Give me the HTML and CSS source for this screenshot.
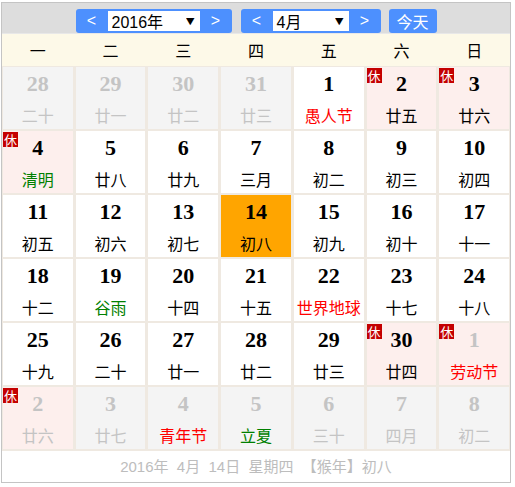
FILE: index.html
```html
<!DOCTYPE html>
<html lang="zh">
<head>
<meta charset="utf-8">
<link rel="stylesheet" href="styles.css">
</head>
<body>
<div class="cal">
  <div class="toolbar">
    <div class="group year">
      <span class="arrow">&lt;</span>
      <div class="select"><span class="val">2016年</span><span class="caret">▼</span></div>
      <span class="arrow">&gt;</span>
    </div>
    <div class="group month">
      <span class="arrow">&lt;</span>
      <div class="select"><span class="val">4月</span><span class="caret">▼</span></div>
      <span class="arrow">&gt;</span>
    </div>
    <div class="today-btn">今天</div>
  </div>
  <div class="weekdays">
    <span>一</span><span>二</span><span>三</span><span>四</span><span>五</span><span>六</span><span>日</span>
  </div>
  <div class="grid">
    <div class="cell other dim"><span class="num">28</span><span class="lunar">二十</span></div>
    <div class="cell other dim"><span class="num">29</span><span class="lunar">廿一</span></div>
    <div class="cell other dim"><span class="num">30</span><span class="lunar">廿二</span></div>
    <div class="cell other dim"><span class="num">31</span><span class="lunar">廿三</span></div>
    <div class="cell"><span class="num">1</span><span class="lunar fest">愚人节</span></div>
    <div class="cell rest"><span class="badge">休</span><span class="num">2</span><span class="lunar">廿五</span></div>
    <div class="cell rest"><span class="badge">休</span><span class="num">3</span><span class="lunar">廿六</span></div>

    <div class="cell rest"><span class="badge">休</span><span class="num">4</span><span class="lunar term">清明</span></div>
    <div class="cell"><span class="num">5</span><span class="lunar">廿八</span></div>
    <div class="cell"><span class="num">6</span><span class="lunar">廿九</span></div>
    <div class="cell"><span class="num">7</span><span class="lunar">三月</span></div>
    <div class="cell"><span class="num">8</span><span class="lunar">初二</span></div>
    <div class="cell"><span class="num">9</span><span class="lunar">初三</span></div>
    <div class="cell"><span class="num">10</span><span class="lunar">初四</span></div>

    <div class="cell"><span class="num">11</span><span class="lunar">初五</span></div>
    <div class="cell"><span class="num">12</span><span class="lunar">初六</span></div>
    <div class="cell"><span class="num">13</span><span class="lunar">初七</span></div>
    <div class="cell today"><span class="num">14</span><span class="lunar">初八</span></div>
    <div class="cell"><span class="num">15</span><span class="lunar">初九</span></div>
    <div class="cell"><span class="num">16</span><span class="lunar">初十</span></div>
    <div class="cell"><span class="num">17</span><span class="lunar">十一</span></div>

    <div class="cell"><span class="num">18</span><span class="lunar">十二</span></div>
    <div class="cell"><span class="num">19</span><span class="lunar term">谷雨</span></div>
    <div class="cell"><span class="num">20</span><span class="lunar">十四</span></div>
    <div class="cell"><span class="num">21</span><span class="lunar">十五</span></div>
    <div class="cell"><span class="num">22</span><span class="lunar fest">世界地球</span></div>
    <div class="cell"><span class="num">23</span><span class="lunar">十七</span></div>
    <div class="cell"><span class="num">24</span><span class="lunar">十八</span></div>

    <div class="cell"><span class="num">25</span><span class="lunar">十九</span></div>
    <div class="cell"><span class="num">26</span><span class="lunar">二十</span></div>
    <div class="cell"><span class="num">27</span><span class="lunar">廿一</span></div>
    <div class="cell"><span class="num">28</span><span class="lunar">廿二</span></div>
    <div class="cell"><span class="num">29</span><span class="lunar">廿三</span></div>
    <div class="cell rest"><span class="badge">休</span><span class="num">30</span><span class="lunar">廿四</span></div>
    <div class="cell rest dim"><span class="badge">休</span><span class="num">1</span><span class="lunar fest">劳动节</span></div>

    <div class="cell rest dim"><span class="badge">休</span><span class="num">2</span><span class="lunar">廿六</span></div>
    <div class="cell other dim"><span class="num">3</span><span class="lunar">廿七</span></div>
    <div class="cell other dim"><span class="num">4</span><span class="lunar fest">青年节</span></div>
    <div class="cell other dim"><span class="num">5</span><span class="lunar term">立夏</span></div>
    <div class="cell other dim"><span class="num">6</span><span class="lunar">三十</span></div>
    <div class="cell other dim"><span class="num">7</span><span class="lunar">四月</span></div>
    <div class="cell other dim"><span class="num">8</span><span class="lunar">初二</span></div>
  </div>
  <div class="footer">2016年&nbsp; 4月&nbsp; 14日&nbsp; 星期四&nbsp; 【猴年】初八</div>
</div>
</body>
</html>
```

FILE: styles.css
```css
html, body {
  margin: 0;
  padding: 0;
  background: #fff;
}
body {
  font-family: "Liberation Sans", "Noto Sans CJK SC", sans-serif;
}
.cal {
  width: 508px;
  margin: 2px 0 0 1px;
  border: 1px solid #c4c4c4;
  background: #fff;
}
.toolbar {
  height: 31px;
  box-sizing: border-box;
  padding-top: 6px;
  background: #dddddd;
  border-bottom: 1px solid #e8e8e8;
  display: flex;
  justify-content: center;
  align-items: flex-start;
  gap: 8px;
}
.group {
  height: 24px;
  background: #4d90fe;
  border-radius: 3px;
  display: flex;
  align-items: center;
}
.year { margin-right: 1px; }
.arrow {
  width: 32px;
  text-align: center;
  color: #fff;
  font-size: 16px;
  line-height: 24px;
}
.select {
  height: 20px;
  background: #fff;
  display: flex;
  align-items: center;
  justify-content: space-between;
  box-sizing: border-box;
  padding: 0 5px 0 4px;
  font-size: 16px;
  color: #000;
}
.year .select { width: 92px; }
.month .select { width: 76px; }
.caret {
  font-size: 11px;
  line-height: 20px;
  font-family: "DejaVu Sans", sans-serif;
  transform: scaleY(0.85);
}
.today-btn {
  width: 48px;
  height: 24px;
  background: #4d90fe;
  border-radius: 3px;
  color: #fff;
  font-size: 16px;
  line-height: 24px;
  text-align: center;
  font-family: "Noto Sans CJK SC", sans-serif;
}
.weekdays {
  height: 32px;
  background: #fdf9e8;
  display: grid;
  grid-template-columns: repeat(7, 1fr);
  padding: 0 1px;
  column-gap: 3px;
}
.weekdays span {
  text-align: center;
  font-size: 16px;
  line-height: 32px;
  color: #000;
  font-family: "Noto Sans CJK SC", sans-serif;
}
.grid {
  background: #efe9e1;
  padding: 1px 1px 2px;
  display: grid;
  grid-template-columns: repeat(7, 1fr);
  grid-auto-rows: 62px;
  column-gap: 3px;
  row-gap: 2px;
}
.cell {
  position: relative;
  background: #fff;
  display: flex;
  flex-direction: column;
  align-items: center;
  padding-top: 6px;
  box-sizing: border-box;
}
.cell.other { background: #f4f4f4; }
.cell.rest { background: #fdefed; }
.cell.today { background: #ffa500; }
.num {
  font-family: "Liberation Serif", serif;
  font-weight: bold;
  font-size: 22px;
  line-height: 22px;
  color: #000;
}
.lunar {
  margin-top: 10px;
  font-family: "Noto Sans CJK SC", sans-serif;
  font-size: 16px;
  line-height: 20px;
  color: #000;
  white-space: nowrap;
}
.cell.dim .num,
.cell.dim .lunar { color: #c4c4c4; }
.cell .lunar.fest { color: #f00; }
.cell .lunar.term { color: #008000; }
.badge {
  position: absolute;
  left: 0;
  top: 1px;
  width: 15px;
  height: 15px;
  background: #c40000;
  color: #fff;
  font-family: "Noto Sans CJK SC", sans-serif;
  font-size: 13px;
  line-height: 15px;
  text-align: center;
}
.footer {
  height: 31px;
  line-height: 31px;
  text-align: center;
  font-size: 15px;
  color: #bdbdbd;
  font-family: "Liberation Sans", "Noto Sans CJK SC", sans-serif;
}
```
